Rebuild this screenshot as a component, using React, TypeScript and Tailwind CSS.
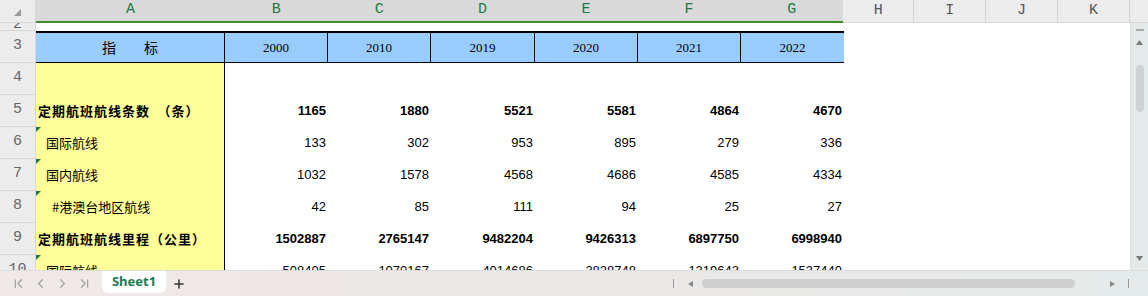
import { ChevronFirst, ChevronLast, ChevronLeft, ChevronRight, Plus } from "lucide-react";

const SELECTED_COLS = [
  { key: "A", w: "w-[189px]" },
  { key: "B", w: "w-[103px]" },
  { key: "C", w: "w-[103px]" },
  { key: "D", w: "w-[104px]" },
  { key: "E", w: "w-[103px]" },
  { key: "F", w: "w-[103px]" },
  { key: "G", w: "w-[103px]" },
];

const OTHER_COLS = [
  { key: "H", w: "w-[71px]" },
  { key: "I", w: "w-[72px]" },
  { key: "J", w: "w-[72px]" },
  { key: "K", w: "w-[72px]" },
];

const YEARS = ["2000", "2010", "2019", "2020", "2021", "2022"];

interface Row {
  n: number;
  label: string;
  bold?: boolean;
  indent: string;
  flag?: boolean;
  vals: number[];
}

const ROWS: Row[] = [
  { n: 5, label: "定期航班航线条数　（条）", bold: true, indent: "pl-[2px]", vals: [1165, 1880, 5521, 5581, 4864, 4670] },
  { n: 6, label: "国际航线", indent: "pl-[10px]", flag: true, vals: [133, 302, 953, 895, 279, 336] },
  { n: 7, label: "国内航线", indent: "pl-[10px]", flag: true, vals: [1032, 1578, 4568, 4686, 4585, 4334] },
  { n: 8, label: "#港澳台地区航线", indent: "pl-[16px]", flag: true, vals: [42, 85, 111, 94, 25, 27] },
  { n: 9, label: "定期航班航线里程（公里）", bold: true, indent: "pl-[2px]", vals: [1502887, 2765147, 9482204, 9426313, 6897750, 6998940] },
  { n: 10, label: "国际航线", indent: "pl-[10px]", flag: true, vals: [508405, 1070167, 4014686, 3828748, 1319643, 1537440] },
];

const cjk = "font-['Noto_Sans_CJK_SC',sans-serif]";
const num = "font-['Liberation_Sans',Arial,sans-serif]";
const mono = "font-['Liberation_Mono',monospace]";

function RowHead({ n, h = "h-[32px]" }: { n: number | string; h?: string }) {
  return (
    <div
      className={`w-[36px] shrink-0 ${h} flex items-center justify-center bg-[#ececec] border-b border-r border-[#d6d6d6] text-[15px] text-[#666] ${mono}`}
    >
      {n}
    </div>
  );
}

function ErrFlag() {
  return (
    <svg className="absolute left-0 top-0" width="5" height="5" viewBox="0 0 5 5">
      <polygon points="0,0 5,0 0,5" fill="#1e7a3c" />
    </svg>
  );
}

function Blanks() {
  return <div className="flex-1 bg-white" />;
}

export default function App() {
  return (
    <div className="w-[1148px] h-[296px] overflow-hidden flex flex-col bg-white select-none">
      <div className="flex h-[270px] overflow-hidden">
        {/* grid */}
        <div className="w-[1130px] flex flex-col overflow-hidden">
          {/* column header */}
          <div className="flex h-[23px] shrink-0">
            <div className="w-[36px] h-[23px] bg-[#ececec] border-b border-r border-[#d6d6d6] flex items-end justify-end pr-[14px] pb-[6px]">
              <svg width="7" height="7" viewBox="0 0 7 7">
                <polygon points="7,0 7,7 0,7" fill="#9a9a9a" />
              </svg>
            </div>
            {SELECTED_COLS.map((c) => (
              <div
                key={c.key}
                className={`${c.w} h-[23px] bg-[#d9d9d9] border-b-2 border-[#3f8f2a] flex items-center justify-center text-[15px] text-[#1f7a45] ${mono}`}
              >
                {c.key}
              </div>
            ))}
            {OTHER_COLS.map((c) => (
              <div
                key={c.key}
                className={`${c.w} h-[23px] bg-[#ececec] border-b border-r border-[#d6d6d6] flex items-center justify-center text-[15px] text-[#555] ${mono}`}
              >
                {c.key}
              </div>
            ))}
          </div>

          {/* row 2 */}
          <div className="flex h-[8px] shrink-0">
            <div className={`w-[36px] h-[8px] overflow-hidden flex items-end justify-center bg-[#ececec] border-b border-r border-[#d6d6d6] text-[15px] text-[#666] leading-[10px] ${mono}`}>
              <span>2</span>
            </div>
            <Blanks />
          </div>

          {/* row 3 header */}
          <div className="flex h-[32px] shrink-0">
            <RowHead n={3} />
            <div className="flex border-t-2 border-b border-black bg-[#99ccff]">
              <div className={`w-[189px] h-[29px] border-r border-black flex items-center justify-center text-[14px] text-black ${cjk}`}>
                指　　标
              </div>
              {YEARS.map((y, i) => (
                <div
                  key={y}
                  className={`${SELECTED_COLS[i + 1].w} h-[29px] flex items-center justify-center text-[13px] text-black font-['Liberation_Serif',serif] ${i < 5 ? "border-r border-black" : ""}`}
                >
                  {y}
                </div>
              ))}
            </div>
            <Blanks />
          </div>

          {/* row 4 */}
          <div className="flex h-[32px] shrink-0">
            <RowHead n={4} />
            <div className="w-[189px] h-[32px] bg-[#ffff99] border-r border-black" />
            <Blanks />
          </div>

          {ROWS.map((r) => (
            <div key={r.n} className="flex h-[32px] shrink-0">
              <RowHead n={r.n} />
              <div
                className={`relative w-[189px] h-[32px] bg-[#ffff99] border-r border-black flex items-center whitespace-nowrap overflow-visible text-[13px] text-black ${r.indent} ${cjk} ${r.bold ? "font-bold tracking-[1px]" : ""}`}
              >
                {r.flag && <ErrFlag />}
                {r.label}
              </div>
              {r.vals.map((v, i) => (
                <div
                  key={i}
                  className={`${SELECTED_COLS[i + 1].w} h-[32px] flex items-center justify-end pr-[2px] text-[13px] text-black ${num} ${r.bold ? "font-bold" : ""}`}
                >
                  {v}
                </div>
              ))}
              <Blanks />
            </div>
          ))}
        </div>

        {/* vertical scrollbar */}
        <div className="w-[18px] flex flex-col">
          <div className="h-[23px] shrink-0 bg-[#ececec] border-b border-[#d6d6d6]" />
          <div className="flex-1 bg-[#e4e9e9] border-l border-[#dde2e2] flex flex-col items-center">
            <div className="mt-[6px] w-[8px] h-[2px] bg-[#a8a8a8]" />
            <svg className="mt-[9px]" width="7" height="5" viewBox="0 0 7 5">
              <polygon points="3.5,0 7,5 0,5" fill="#7a7a7a" />
            </svg>
            <div className="mt-[20px] w-[8px] h-[47px] rounded-full bg-[#cfd2d2]" />
            <div className="flex-1" />
            <svg className="mb-[9px]" width="7" height="5" viewBox="0 0 7 5">
              <polygon points="0,0 7,0 3.5,5" fill="#7a7a7a" />
            </svg>
          </div>
        </div>
      </div>

      {/* bottom bar */}
      <div className="h-[26px] flex items-start border-t border-[#dcdcdc] bg-gradient-to-r from-[#efe9e8] via-[#ece8e6] to-[#e4eaea]">
        <div className="flex items-center h-[25px] pl-[7px] text-[#a3a3a3]">
          <div className="w-[22px] flex justify-center"><ChevronFirst size={15} strokeWidth={2} /></div>
          <div className="w-[22px] flex justify-center"><ChevronLeft size={15} strokeWidth={2} /></div>
          <div className="w-[22px] flex justify-center"><ChevronRight size={15} strokeWidth={2} /></div>
          <div className="w-[22px] flex justify-center"><ChevronLast size={15} strokeWidth={2} /></div>
        </div>
        <div className="ml-[7px] w-[64px] h-[22px] bg-white rounded-b-[6px] flex items-center justify-center text-[13px] font-bold text-[#1b7a55] font-['Noto_Sans',sans-serif]">
          Sheet1
        </div>
        <div className="ml-[6px] h-[25px] flex items-center text-[#333]">
          <Plus size={14} strokeWidth={2.6} />
        </div>
        <div className="flex-1" />
        <div className="h-[25px] flex items-center">
          <div className="w-[1px] h-[9px] bg-[#9a9a9a]" />
          <svg className="ml-[14px]" width="5" height="6" viewBox="0 0 5 6">
            <polygon points="5,0 5,6 0,3" fill="#888" />
          </svg>
          <div className="ml-[9px] w-[373px] h-[9px] rounded-full bg-[#cecece]" />
          <svg className="ml-[35px]" width="5" height="6" viewBox="0 0 5 6">
            <polygon points="0,0 5,3 0,6" fill="#888" />
          </svg>
          <div className="ml-[13px] w-[1px] h-[9px] bg-[#9a9a9a]" />
          <div className="w-[19px]" />
        </div>
      </div>
    </div>
  );
}
